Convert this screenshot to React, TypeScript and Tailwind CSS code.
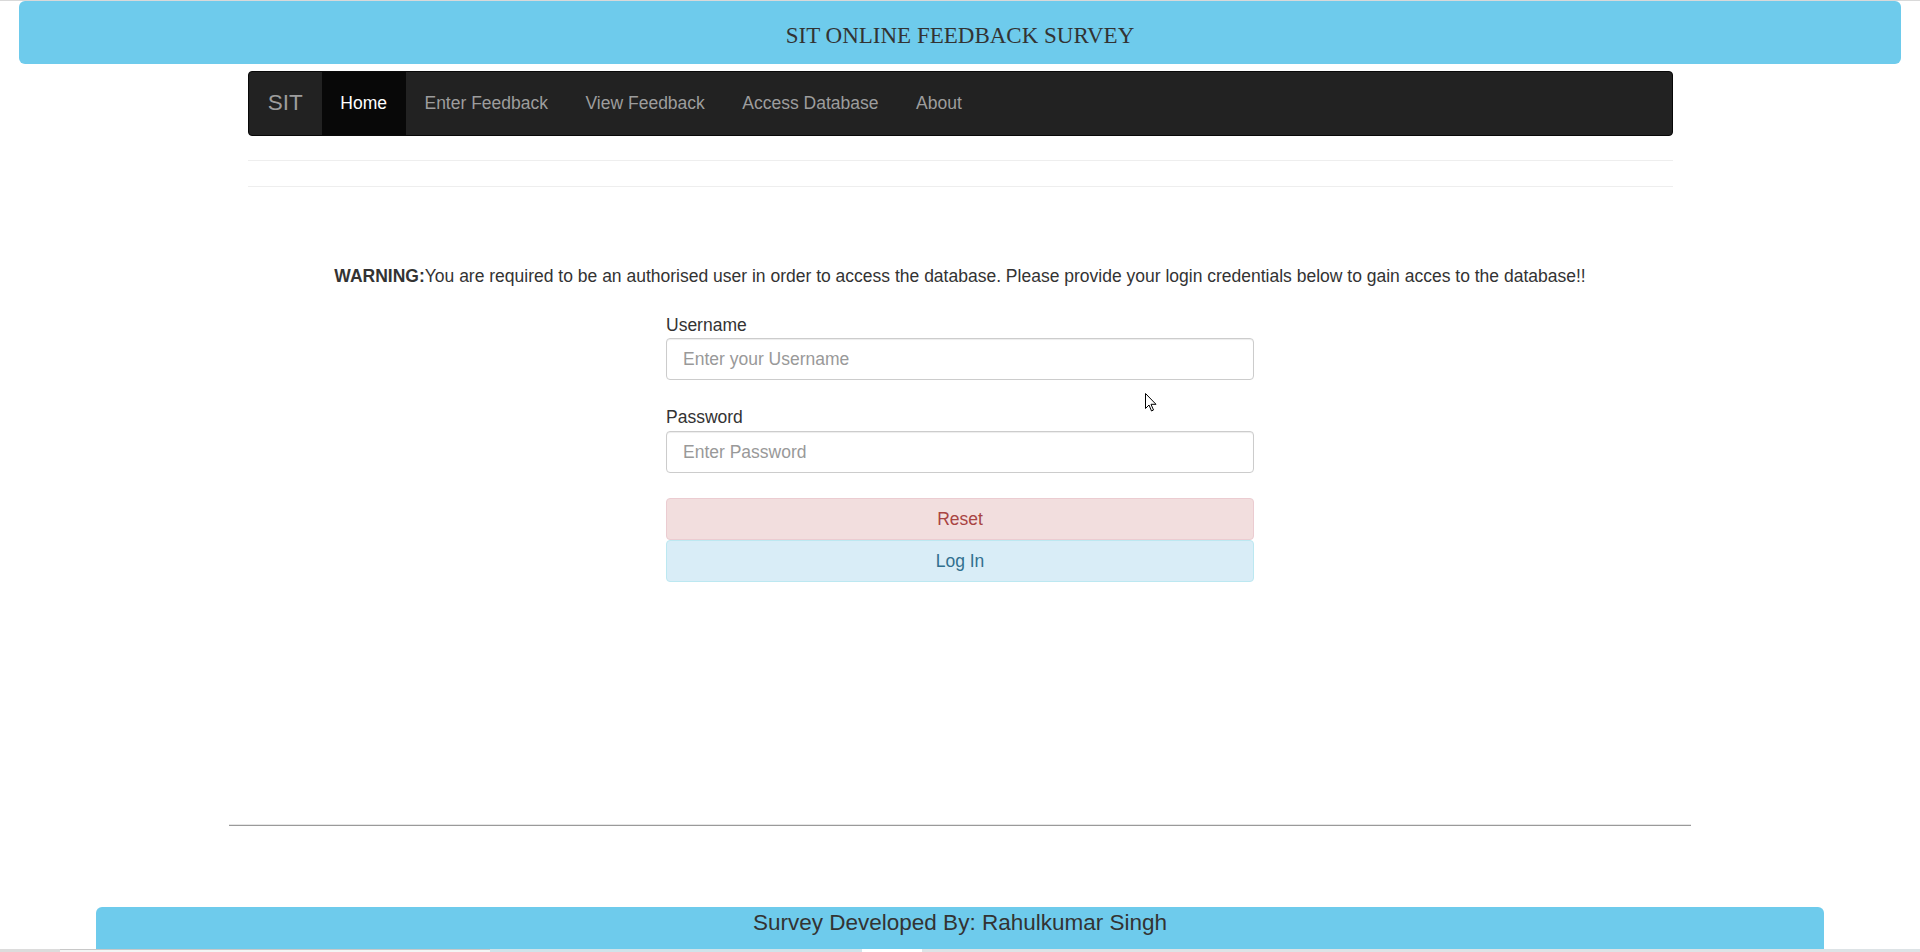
import React from 'react';

const navItems = ['Enter Feedback', 'View Feedback', 'Access Database', 'About'];

const App: React.FC = () => {
  return (
    <div
      className="relative h-[952px] overflow-hidden bg-white border-t border-[#d9d9d9] text-[#333]"
      style={{ fontFamily: '"Liberation Sans", Arial, sans-serif' }}
    >
      {/* top banner */}
      <div
        className="mx-[19px] h-[63px] rounded-[6px] bg-[#6ecbec] pt-[20px] text-center text-[23px] leading-[30px] text-[#333]"
        style={{ fontFamily: '"Liberation Serif", "Times New Roman", serif' }}
      >
        SIT ONLINE FEEDBACK SURVEY
      </div>

      {/* navbar */}
      <nav className="ml-[248px] mr-[247px] mt-[7px] flex h-[65px] rounded-[4px] border border-[#080808] bg-[#222]">
        <span className="px-[18.75px] pt-[19px] text-[22.5px] leading-[24px] text-[#9d9d9d]">SIT</span>
        <span className="bg-[#080808] px-[18.75px] pt-[19px] text-[17.5px] leading-[24px] text-white">Home</span>
        {navItems.map((item) => (
          <span key={item} className="px-[18.75px] pt-[19px] text-[17.5px] leading-[24px] text-[#9d9d9d]">
            {item}
          </span>
        ))}
      </nav>

      <div className="ml-[248px] mr-[247px] mt-[24px] border-t border-[#eee]" />
      <div className="ml-[248px] mr-[247px] mt-[25px] border-t border-[#eee]" />

      {/* warning */}
      <p className="mt-[77px] text-center text-[17.5px] leading-[25px] text-[#333]">
        <b>WARNING:</b>You are required to be an authorised user in order to access the database. Please provide your login credentials below to gain acces to the database!!
      </p>

      {/* login form */}
      <form className="mx-auto mt-[24px] w-[588px]">
        <label className="block text-[17.5px] leading-[24px] text-[#333]">Username</label>
        <input
          type="text"
          placeholder="Enter your Username"
          className="mt-[1px] block h-[42px] w-full rounded-[4px] border border-[#ccc] px-[16px] text-[17.5px] text-[#555] shadow-[inset_0_1px_1px_rgba(0,0,0,0.075)] outline-none placeholder:text-[#999]"
        />
        <label className="mt-[25px] block text-[17.5px] leading-[24px] text-[#333]">Password</label>
        <input
          type="password"
          placeholder="Enter Password"
          className="mt-[2px] block h-[42px] w-full rounded-[4px] border border-[#ccc] px-[16px] text-[17.5px] text-[#555] shadow-[inset_0_1px_1px_rgba(0,0,0,0.075)] outline-none placeholder:text-[#999]"
        />
        <button
          type="reset"
          className="mt-[25px] block h-[42px] w-full rounded-[4px] border border-[#ebccd1] bg-[#f2dede] text-[17.5px] text-[#a94442]"
        >
          Reset
        </button>
        <button
          type="button"
          className="block h-[42px] w-full rounded-[4px] border border-[#bce8f1] bg-[#d9edf7] text-[17.5px] text-[#31708f]"
        >
          Log In
        </button>
      </form>

      {/* bottom rule */}
      <div className="ml-[229px] mr-[229px] mt-[242px] border-t border-b border-t-[#e6e6e6] border-b-[#9a9a9a]" />

      {/* footer */}
      <div className="mx-[96px] mt-[81px] h-[42px] rounded-t-[6px] bg-[#6ecbec] text-center text-[22.5px] leading-[32px] text-[#333]">
        Survey Developed By: Rahulkumar Singh
      </div>
      <div className="flex h-[3px]">
        <div className="w-[60px] bg-[#dcdcdc]" />
        <div className="w-[430px] bg-[#f4f4f4] border-t border-[#c8c8c8]" />
        <div className="w-[372px] bg-[#cfe3ea]" />
        <div className="w-[60px] bg-white" />
        <div className="flex-1 bg-[#dde3e6]" />
      </div>

      {/* mouse pointer */}
      <svg className="absolute left-[1145px] top-[392px]" width="12" height="19" viewBox="0 0 12 19">
        <path d="M0.5 0.5 L0.5 15.5 L4 12 L6.5 18 L8.5 17 L6 11.3 L11 11.3 Z" fill="#fff" stroke="#000" strokeWidth="1" strokeLinejoin="round" />
      </svg>
    </div>
  );
};

export default App;
